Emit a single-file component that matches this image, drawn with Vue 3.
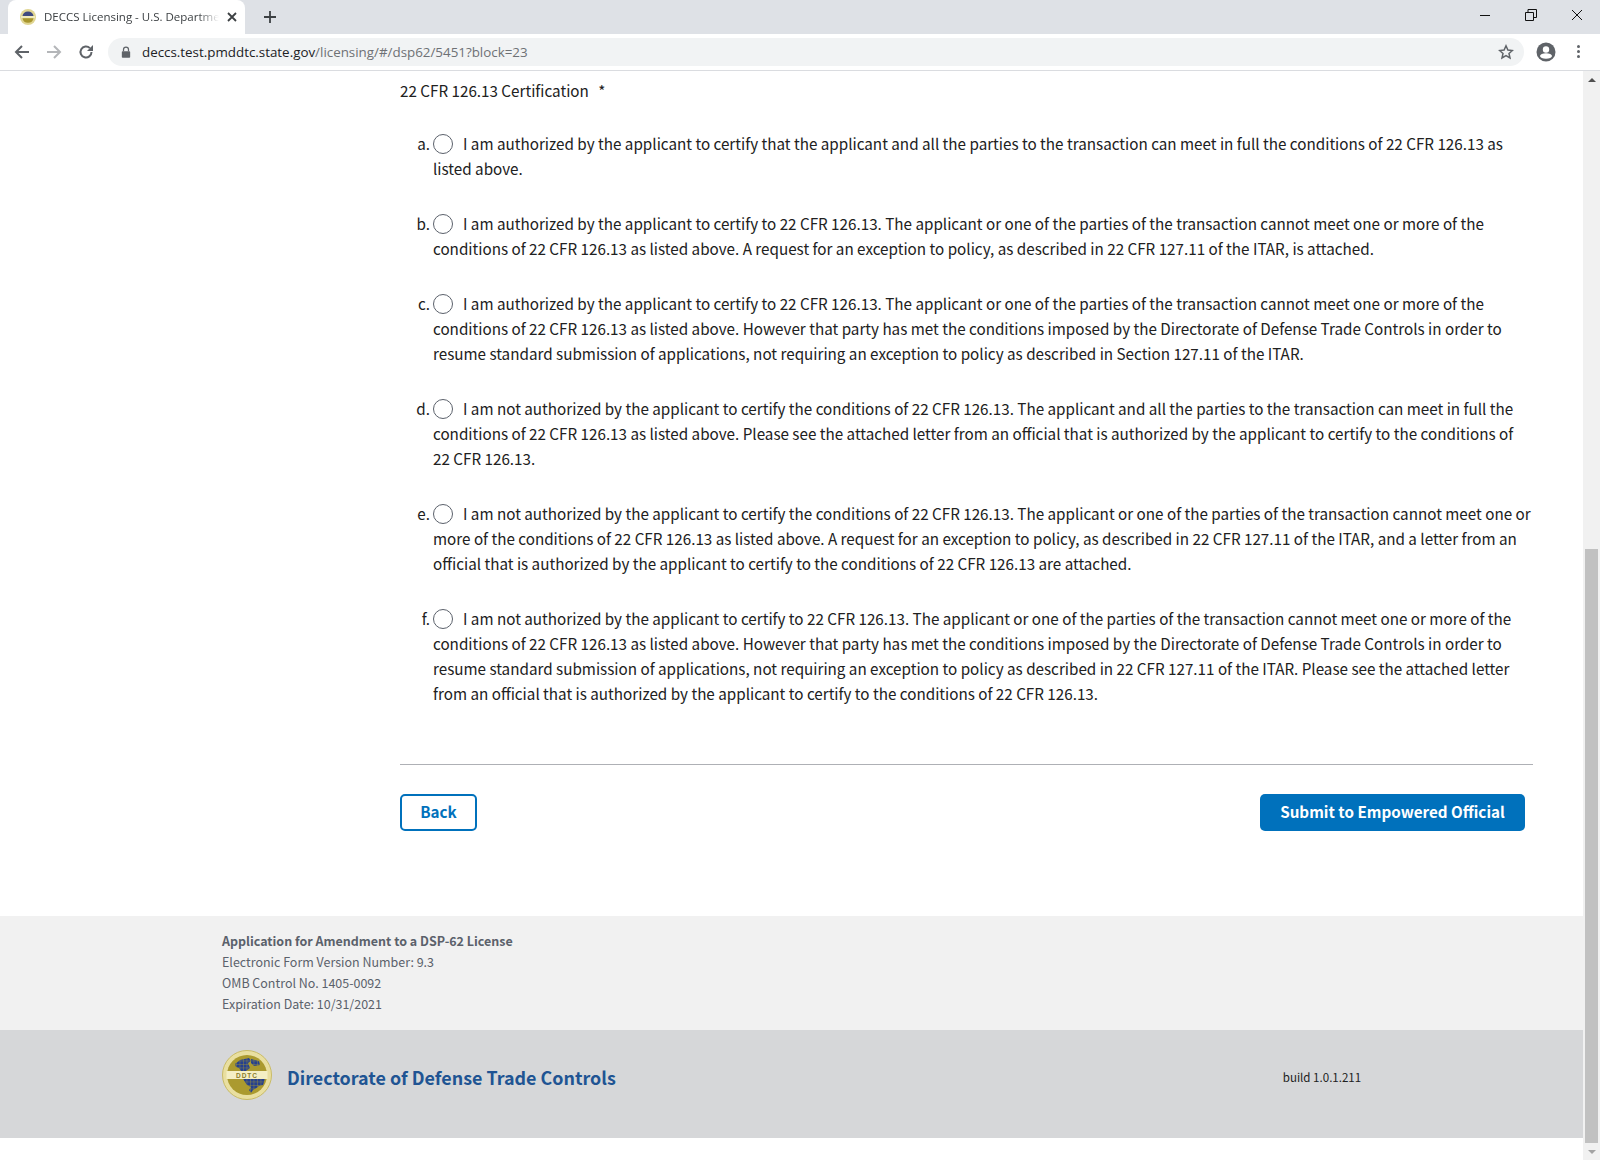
<script setup>
const options = [
  { mark: 'a.', text: 'I am authorized by the applicant to certify that the applicant and all the parties to the transaction can meet in full the conditions of 22 CFR 126.13 as listed above.' },
  { mark: 'b.', text: 'I am authorized by the applicant to certify to 22 CFR 126.13. The applicant or one of the parties of the transaction cannot meet one or more of the conditions of 22 CFR 126.13 as listed above. A request for an exception to policy, as described in 22 CFR 127.11 of the ITAR, is attached.' },
  { mark: 'c.', text: 'I am authorized by the applicant to certify to 22 CFR 126.13. The applicant or one of the parties of the transaction cannot meet one or more of the conditions of 22 CFR 126.13 as listed above. However that party has met the conditions imposed by the Directorate of Defense Trade Controls in order to resume standard submission of applications, not requiring an exception to policy as described in Section 127.11 of the ITAR.' },
  { mark: 'd.', text: 'I am not authorized by the applicant to certify the conditions of 22 CFR 126.13. The applicant and all the parties to the transaction can meet in full the conditions of 22 CFR 126.13 as listed above. Please see the attached letter from an official that is authorized by the applicant to certify to the conditions of 22 CFR 126.13.' },
  { mark: 'e.', text: 'I am not authorized by the applicant to certify the conditions of 22 CFR 126.13. The applicant or one of the parties of the transaction cannot meet one or more of the conditions of 22 CFR 126.13 as listed above. A request for an exception to policy, as described in 22 CFR 127.11 of the ITAR, and a letter from an official that is authorized by the applicant to certify to the conditions of 22 CFR 126.13 are attached.' },
  { mark: 'f.', text: 'I am not authorized by the applicant to certify to 22 CFR 126.13. The applicant or one of the parties of the transaction cannot meet one or more of the conditions of 22 CFR 126.13 as listed above. However that party has met the conditions imposed by the Directorate of Defense Trade Controls in order to resume standard submission of applications, not requiring an exception to policy as described in 22 CFR 127.11 of the ITAR. Please see the attached letter from an official that is authorized by the applicant to certify to the conditions of 22 CFR 126.13.' },
]
</script>

<template>
  <div class="window">
    <div class="tabstrip">
      <div class="tab">
        <svg class="favicon" viewBox="0 0 16 16" width="16" height="16">
          <circle cx="8" cy="8" r="8" fill="#e0d592" />
          <path d="M2.500 7a5.600 5.600 0 0 1 11 0z" fill="#3f4a80" />
          <rect x="1" y="7" width="14" height="2.200" fill="#f0ebbd" />
          <path d="M2.500 9.200h11a5.600 5.600 0 0 1-11 0z" fill="#a8962e" />
        </svg>
        <span class="tab-title">DECCS Licensing - U.S. Department of State</span>
        <svg class="tab-close" viewBox="0 0 10 10" width="10" height="10">
          <path d="M1 1l8 8M9 1l-8 8" stroke="#3c4043" stroke-width="1.8" fill="none" />
        </svg>
      </div>
      <svg class="new-tab" viewBox="0 0 12 12" width="12" height="12">
        <path d="M6 0v12M0 6h12" stroke="#3c4043" stroke-width="1.8" fill="none" />
      </svg>
      <div class="window-buttons">
        <svg viewBox="0 0 12 12" width="12" height="12"><path d="M1 6.500h10" stroke="#111" fill="none" /></svg>
        <svg viewBox="0 0 12 12" width="12" height="12"><path d="M.5 3.500h8v8h-8zM3 3.500v-3h8.500v8h-3" stroke="#111" fill="none" /></svg>
        <svg viewBox="0 0 12 12" width="12" height="12"><path d="M1 1l10 10M11 1L1 11" stroke="#111" fill="none" /></svg>
      </div>
    </div>

    <div class="toolbar">
      <svg class="nav" viewBox="0 0 16 16" width="16" height="16"><path d="M15 8H2M8 2L2 8l6 6" stroke="#5f6368" stroke-width="2" fill="none" /></svg>
      <svg class="nav" viewBox="0 0 16 16" width="16" height="16"><path d="M1 8h13M8 2l6 6-6 6" stroke="#b4b6b9" stroke-width="2" fill="none" /></svg>
      <svg class="nav" viewBox="0 0 16 16" width="16" height="16">
        <path d="M13.500 8a5.500 5.500 0 1 1-1.600-3.900" stroke="#5f6368" stroke-width="2" fill="none" />
        <path d="M15 1v6H9z" fill="#5f6368" />
      </svg>
      <div class="omnibox">
        <svg viewBox="0 0 12 14" width="10" height="12">
          <path d="M3 6V4a3 3 0 0 1 6 0v2" stroke="#5f6368" stroke-width="1.500" fill="none" />
          <rect x="1" y="6" width="10" height="8" rx="1" fill="#5f6368" />
        </svg>
        <span class="url"><span class="host">deccs.test.pmddtc.state.gov</span>/licensing/#/dsp62/5451?block=23</span>
        <svg class="star" viewBox="0 0 16 16" width="16" height="16">
          <path d="M8 1.800l1.900 4.200 4.500.5-3.400 3 1 4.500L8 11.700 4 14l1-4.500-3.400-3 4.500-.5z" stroke="#5f6368" stroke-width="1.500" fill="none" />
        </svg>
      </div>
      <svg class="avatar" viewBox="0 0 20 20" width="20" height="20">
        <circle cx="10" cy="10" r="9.500" fill="#5f6368" />
        <circle cx="10" cy="7.500" r="3.200" fill="#fff" />
        <ellipse cx="10" cy="14" rx="6" ry="2.800" fill="#fff" />
      </svg>
      <div class="kebab"><i></i><i></i><i></i></div>
    </div>

    <div class="viewport">
      <div class="page">
        <main class="content">
          <div class="question">22 CFR 126.13 Certification <span class="req">*</span></div>
          <div class="options">
            <div v-for="opt in options" :key="opt.mark" class="option">
              <span class="mark">{{ opt.mark }}</span>
              <label class="option-text"><span class="radio"></span>{{ opt.text }}</label>
            </div>
          </div>
          <hr class="rule" />
          <div class="actions">
            <button class="btn btn-outline">Back</button>
            <button class="btn btn-primary">Submit to Empowered Official</button>
          </div>
        </main>

        <div class="form-info">
          <strong>Application for Amendment to a DSP-62 License</strong>
          <span>Electronic Form Version Number: 9.3</span>
          <span>OMB Control No. 1405-0092</span>
          <span>Expiration Date: 10/31/2021</span>
        </div>

        <footer class="agency">
          <svg class="seal" viewBox="0 0 50 50" width="50" height="50">
            <defs>
              <pattern id="seal-grid" width="3.500" height="3.500" patternUnits="userSpaceOnUse">
                <rect width="3.500" height="3.500" fill="#25408f" />
                <path d="M0 0h3.500M0 0v3.500" stroke="#ab9a2f" stroke-width=".7" />
              </pattern>
            </defs>
            <circle cx="25" cy="25" r="24.500" fill="#e9dfa0" stroke="#c9bb66" />
            <circle cx="25" cy="25" r="20" fill="#ab9a2f" />
            <path d="M13 14l5-4 9-2 2 3-3 2 2 5-4 3h-5l-2-3-3-1zM29 9l8 2 1 4-6 1-3-3z" fill="url(#seal-grid)" />
            <path d="M21 29h16l2 2-3 6-5 3-2 3-2-3 2-3-4-2zM36 29h7l-2 6-4 1z" fill="url(#seal-grid)" />
            <rect x="4.500" y="21" width="41" height="8" fill="#f4efc4" />
            <text x="25" y="27.500" class="seal-text" text-anchor="middle">DDTC</text>
          </svg>
          <span class="agency-name">Directorate of Defense Trade Controls</span>
          <span class="build">build 1.0.1.211</span>
        </footer>
      </div>

      <div class="scrollbar">
        <div class="arrow arrow-up"></div>
        <div class="track"></div>
        <div class="thumb"></div>
        <div class="arrow arrow-down"></div>
      </div>
    </div>
  </div>
</template>

<style>
html, body {
  margin: 0;
  overflow: hidden;
}
</style>

<style scoped>
.window {
  width: 1600px;
  height: 1160px;
  display: flex;
  flex-direction: column;
  overflow: hidden;
  background: #fff;
  font-family: "Noto Sans CJK SC", "Noto Sans", sans-serif;
  color: #212121;
}

.tabstrip {
  height: 34px;
  flex: none;
  display: flex;
  align-items: flex-end;
  background: #dee1e6;
}

.tab {
  width: 237px;
  height: 34px;
  margin-left: 8px;
  padding: 0 8px 0 12px;
  box-sizing: border-box;
  display: flex;
  align-items: center;
  gap: 8px;
  background: #fff;
  border-radius: 8px 8px 0 0;
}

.favicon {
  flex: none;
}

.tab-title {
  flex: 1;
  padding-bottom: 2px;
  overflow: hidden;
  white-space: nowrap;
  font: 11.500px "Open Sans", sans-serif;
  color: #3c4043;
  -webkit-mask-image: linear-gradient(to right, #000 88%, transparent);
  mask-image: linear-gradient(to right, #000 88%, transparent);
}

.tab-close {
  flex: none;
}

.new-tab {
  margin: 0 0 11px 19px;
}

.window-buttons {
  margin-left: auto;
  align-self: stretch;
  display: flex;
  align-items: center;
  gap: 34px;
  padding: 0 17px 4px 0;
}

.toolbar {
  height: 37px;
  flex: none;
  display: flex;
  align-items: center;
  box-sizing: border-box;
  padding: 0 0 1px 14px;
  border-bottom: 1px solid #dadce0;
}

.nav {
  margin-right: 16px;
}

.omnibox {
  width: 1416px;
  height: 28px;
  margin-left: -2px;
  padding: 0 10px 0 13px;
  box-sizing: border-box;
  display: flex;
  align-items: center;
  gap: 11px;
  background: #f1f3f4;
  border-radius: 14px;
}

.url {
  flex: 1;
  font: 13.360px "Open Sans", sans-serif;
  color: #6e7175;
}

.host {
  color: #202124;
}

.avatar {
  margin-left: 12px;
}

.kebab {
  margin-left: 21px;
  display: flex;
  flex-direction: column;
  gap: 2px;
}

.kebab i {
  width: 3px;
  height: 3px;
  border-radius: 50%;
  background: #5f6368;
}

.viewport {
  flex: 1;
  min-height: 0;
  display: flex;
}

.page {
  flex: 1;
  min-width: 0;
}

.content {
  height: 845px;
  box-sizing: border-box;
  padding: 7px 50px 0 400px;
  font-size: 15.220px;
  line-height: 25px;
}

.question {
  height: 25px;
}

.req {
  margin-left: 6px;
}

.options {
  margin-top: 28px;
}

.option {
  display: grid;
  grid-template-columns: 33px 1fr;
  margin-bottom: 30px;
}

.mark {
  text-align: right;
  padding-right: 3px;
}

.radio {
  display: inline-block;
  width: 20px;
  height: 20px;
  margin-right: 10px;
  box-sizing: border-box;
  border: 1px solid #5b616b;
  border-radius: 50%;
  background: #fff;
  vertical-align: -4px;
}

.rule {
  height: 1px;
  margin: 58px 0 0;
  border: 0;
  background: #aeb0b5;
}

.actions {
  margin-top: 29px;
  padding-right: 8px;
  display: flex;
  justify-content: space-between;
}

.btn {
  height: 37px;
  padding: 0 0 2px;
  box-sizing: border-box;
  border-radius: 5px;
  font-family: inherit;
  font-size: 15.220px;
  font-weight: 700;
  line-height: 1;
}

.btn-outline {
  width: 77px;
  background: #fff;
  border: 2px solid #0071bc;
  color: #0071bc;
}

.btn-primary {
  width: 265px;
  background: #0071bc;
  border: 0;
  color: #fff;
}

.form-info {
  height: 114px;
  box-sizing: border-box;
  padding: 15px 0 0 222px;
  display: flex;
  flex-direction: column;
  background: #f1f1f1;
  font-size: 12.480px;
  line-height: 21px;
  color: #5b616b;
}

.form-info strong {
  font-weight: 700;
}

.agency {
  height: 108px;
  box-sizing: border-box;
  padding: 20px 0 0 222px;
  display: flex;
  align-items: flex-start;
  background: #d6d7d9;
}

.seal {
  flex: none;
}

.seal-text {
  font: 700 6.500px "Liberation Sans", sans-serif;
  letter-spacing: 1px;
  fill: #8a7d2c;
}

.agency-name {
  margin: 13px 0 0 15px;
  font-size: 17.900px;
  line-height: 28px;
  font-weight: 700;
  color: #205493;
}

.build {
  margin: 18px 0 0 667px;
  font-size: 11.550px;
  line-height: 18px;
  color: #212121;
}

.scrollbar {
  width: 17px;
  flex: none;
  display: flex;
  flex-direction: column;
  background: #f1f1f1;
}

.arrow {
  height: 17px;
  flex: none;
  display: flex;
  align-items: center;
  justify-content: center;
}

.arrow::before {
  content: "";
  border-left: 4px solid transparent;
  border-right: 4px solid transparent;
}

.arrow-up::before {
  border-bottom: 4px solid #505050;
}

.arrow-down::before {
  border-top: 4px solid #a3a3a3;
}

.track {
  height: 461px;
  flex: none;
}

.thumb {
  flex: 1;
  margin: 0 2px 0 2px;
  background: #c1c1c1;
}
</style>
